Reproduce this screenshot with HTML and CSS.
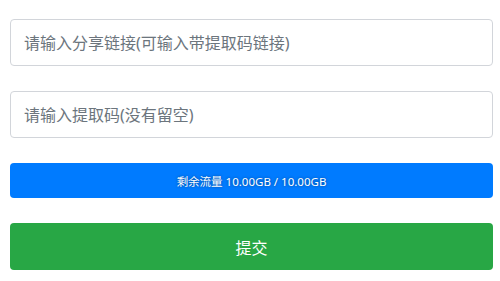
FILE: index.html
```html
<!DOCTYPE html>
<html lang="zh-CN">
<head>
    <meta charset="UTF-8">
    <meta name="viewport" content="width=device-width, initial-scale=1.0">
    <title>提取</title>
    <link rel="stylesheet" href="styles.css">
</head>
<body>
    <form class="fetch-form" id="fetchForm">
        <input type="text" class="field" id="shareLink" placeholder="请输入分享链接(可输入带提取码链接)" />
        <input type="text" class="field" id="shareCode" placeholder="请输入提取码(没有留空)" />
        <div class="quota">剩余流量 10.00GB / 10.00GB</div>
        <button type="submit" class="submit-button">提交</button>
    </form>
</body>
</html>
```

FILE: styles.css
```css
/* Estilos generales */
body {
    font-family: "Noto Sans", "Noto Sans CJK SC", sans-serif;
    margin: 0;
    padding: 0;
    background-color: #fff;
    color: #495057;
}

.fetch-form {
    display: flex;
    flex-direction: column;
    gap: 25px;
    padding: 19px 7px 0 10px;
}

.field {
    box-sizing: border-box;
    width: 100%;
    height: 47px;
    padding: 0 13px;
    margin: 0;
    border: 1px solid #d2d5da;
    border-radius: 4px;
    font-family: inherit;
    font-size: 16px;
    color: #495057;
    outline: none;
}

.field::placeholder {
    color: #6c757d;
}

.quota {
    height: 35px;
    display: flex;
    justify-content: center;
    align-items: center;
    background-color: #007bff;
    border-radius: 4px;
    color: #fff;
    font-size: 11.5px;
    text-shadow: 0 0 3px rgba(0, 0, 0, 0.45);
}

.submit-button {
    height: 47px;
    margin: 0;
    background-color: #28a745;
    color: #fff;
    border: none;
    border-radius: 4px;
    font-family: inherit;
    font-size: 16px;
    cursor: pointer;
}

.submit-button:hover {
    background-color: #218838;
}
```
